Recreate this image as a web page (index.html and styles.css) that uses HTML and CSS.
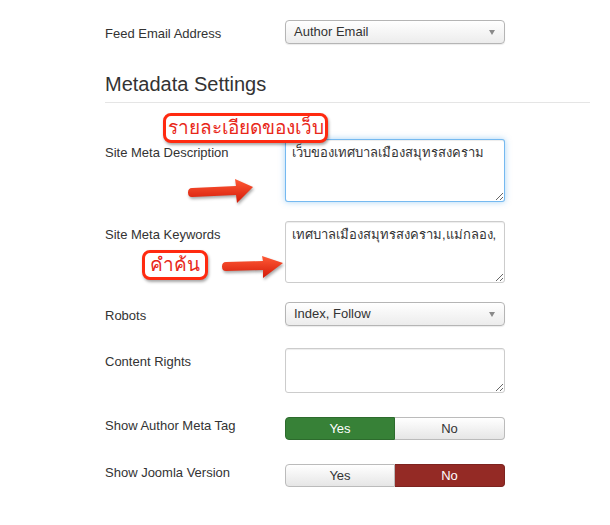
FILE: index.html
```html
<!DOCTYPE html>
<html lang="th">
<head>
  <meta charset="UTF-8" />
  <meta name="viewport" content="width=device-width, initial-scale=1.0"/>
  <title>Metadata Settings</title>
  <link rel="stylesheet" href="styles.css">
</head>
<body>
  <div class="page">
    <div class="row row-select">
      <label class="lbl">Feed Email Address</label>
      <div class="select">Author Email</div>
    </div>

    <h2 class="section">Metadata Settings</h2>

    <div class="row">
      <label class="lbl" for="desc">Site Meta Description</label>
      <textarea id="desc" class="area area-desc focused">เว็บของเทศบาลเมืองสมุทรสงคราม</textarea>
    </div>

    <div class="row">
      <label class="lbl" for="keys">Site Meta Keywords</label>
      <textarea id="keys" class="area area-keys">เทศบาลเมืองสมุทรสงคราม,แม่กลอง,</textarea>
    </div>

    <div class="row row-select">
      <label class="lbl">Robots</label>
      <div class="select">Index, Follow</div>
    </div>

    <div class="row">
      <label class="lbl" for="rights">Content Rights</label>
      <textarea id="rights" class="area area-rights"></textarea>
    </div>

    <div class="row">
      <label class="lbl">Show Author Meta Tag</label>
      <div class="toggle">
        <span class="btn yes-on">Yes</span>
        <span class="btn">No</span>
      </div>
    </div>

    <div class="row">
      <label class="lbl">Show Joomla Version</label>
      <div class="toggle">
        <span class="btn">Yes</span>
        <span class="btn no-on">No</span>
      </div>
    </div>

    <!-- annotations drawn over the form -->
    <div class="callout callout-desc">รายละเอียดของเว็บ</div>
    <div class="callout callout-keys">คำค้น</div>

    <svg class="arrow arrow-desc" width="72" height="32" viewBox="0 0 72 32">
      <defs>
        <linearGradient id="red1" x1="0" y1="0" x2="0" y2="1">
          <stop offset="0" stop-color="#ff5a36"/>
          <stop offset="1" stop-color="#d41a08"/>
        </linearGradient>
      </defs>
      <path d="M6,12 L50,10 L49,3 L67,11 L51,27 L50,19 L6,21 Q2,21 2,16.5 Q2,12 6,12 Z" fill="url(#red1)"/>
    </svg>

    <svg class="arrow arrow-keys" width="70" height="30" viewBox="0 0 70 30">
      <defs>
        <linearGradient id="red2" x1="0" y1="0" x2="0" y2="1">
          <stop offset="0" stop-color="#ff5a36"/>
          <stop offset="1" stop-color="#d41a08"/>
        </linearGradient>
      </defs>
      <path d="M7,10 L44,9 L43,4 L64,11 L44,26 L44,18 L7,19 Q3,19 3,14.5 Q3,10 7,10 Z" fill="url(#red2)"/>
    </svg>
  </div>
</body>
</html>
```

FILE: styles.css
```css
body {
  margin: 0;
  background-color: #fff;
  font-family: "Liberation Sans", Arial, "Noto Sans", sans-serif;
  font-size: 13px;
  color: #333;
}
.page {
  position: relative;
  padding: 20px 20px 0 105px;
}
.row {
  display: flex;
  align-items: flex-start;
  margin-bottom: 19px;
}
.row-select {
  min-height: 27px;
}
.lbl {
  width: 180px;
  flex: none;
  padding-top: 5px;
  line-height: 18px;
}
.select {
  position: relative;
  width: 220px;
  height: 24px;
  box-sizing: border-box;
  padding-left: 8px;
  line-height: 22px;
  border: 1px solid #b5b5b5;
  border-radius: 4px;
  background: linear-gradient(#ffffff, #ececec);
  box-shadow: 0 1px 1px rgba(0,0,0,0.08);
}
.select::after {
  content: "";
  position: absolute;
  right: 9px;
  top: 9px;
  border-left: 3.5px solid transparent;
  border-right: 3.5px solid transparent;
  border-top: 5px solid #8a8a8a;
}
.section {
  margin: 25px 0 36px;
  padding-bottom: 6px;
  font-size: 20px;
  font-weight: normal;
  line-height: 24px;
  border-bottom: 1px solid #e5e5e5;
}
.area {
  width: 220px;
  box-sizing: border-box;
  margin: 0;
  padding: 4px 6px;
  font-family: "Liberation Sans", Arial, "Noto Sans", sans-serif;
  font-size: 13px;
  line-height: 18px;
  color: #333;
  border: 1px solid #ccc;
  border-radius: 3px;
  box-shadow: inset 0 1px 1px rgba(0,0,0,0.075);
  outline: none;
}
.area-desc { height: 63px; }
.area-keys { height: 62px; }
.area-rights { height: 45px; }
.focused {
  border-color: rgba(82,168,236,0.8);
  box-shadow: inset 0 1px 1px rgba(0,0,0,0.075), 0 0 6px rgba(82,168,236,0.5);
}
.toggle {
  display: flex;
  margin-top: 5px;
}
.btn {
  width: 110px;
  height: 23px;
  box-sizing: border-box;
  text-align: center;
  line-height: 21px;
  border: 1px solid #bbb;
  background: linear-gradient(#ffffff, #e6e6e6);
  color: #333;
}
.btn:first-child {
  border-radius: 4px 0 0 4px;
}
.btn:last-child {
  border-left: none;
  border-radius: 0 4px 4px 0;
}
.yes-on {
  background: #378137;
  border-color: #2d6b2d;
  color: #fff;
}
.no-on {
  background: #942a25;
  border-color: #7d231f;
  color: #fff;
}
.callout {
  position: absolute;
  box-sizing: border-box;
  height: 30px;
  line-height: 24px;
  text-align: center;
  font-size: 19px;
  color: #e8281a;
  background: #fff;
  border: 3px solid #ff2a10;
  border-radius: 8px;
  box-shadow: 1px 2px 3px rgba(0,0,0,0.35);
}
.callout-desc {
  left: 163px;
  top: 113px;
  width: 165px;
}
.callout-keys {
  left: 142px;
  top: 250px;
  width: 66px;
}
.arrow {
  position: absolute;
  filter: drop-shadow(1px 2px 1.5px rgba(0,0,0,0.35));
}
.arrow-desc {
  left: 186px;
  top: 176px;
}
.arrow-keys {
  left: 219px;
  top: 252px;
}
```
